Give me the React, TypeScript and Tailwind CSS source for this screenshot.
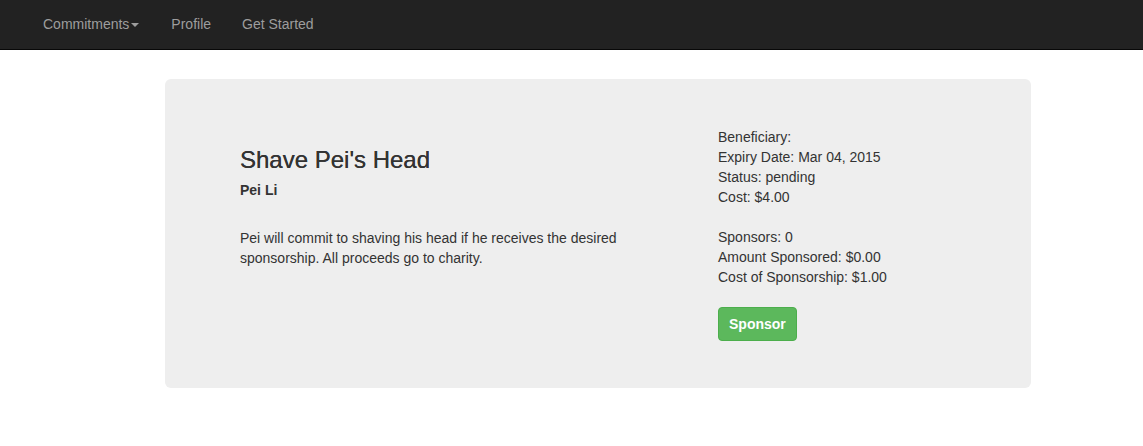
export default function App() {
  return (
    <div className="min-h-[446px] bg-white text-[14px] leading-[20px] text-[#333]" style={{ fontFamily: '"Liberation Sans", Arial, sans-serif' }}>
      <nav className="h-[50px] bg-[#222] border-b border-[#080808] flex items-start pl-[28px]">
        <a className="flex items-center px-[15px] pt-[14px] text-[#9d9d9d] leading-[20px]">
          Commitments
          <span className="ml-[2px] inline-block w-0 h-0 border-l-[4px] border-r-[4px] border-t-[4px] border-l-transparent border-r-transparent border-t-[#9d9d9d] mt-[1px]" />
        </a>
        <a className="ml-[2px] px-[15px] pt-[14px] text-[#9d9d9d] leading-[20px]">Profile</a>
        <a className="ml-[1px] px-[15px] pt-[14px] text-[#9d9d9d] leading-[20px]">Get Started</a>
      </nav>
      <div className="pt-[29px] pl-[165px]">
        <div className="w-[866px] h-[309px] bg-[#eee] rounded-[6px] pt-[48px] pb-[48px] pl-[75px] flex">
          <div className="w-[440px]">
            <h3 className="mt-[20px] text-[24px] leading-[26.4px] font-medium text-[#333] [text-shadow:0_0_0.4px_#333]">Shave Pei's Head</h3>
            <h5 className="mt-[10px] text-[14px] leading-[15.4px] font-bold text-[#333]">Pei Li</h5>
            <p className="mt-[29px]">Pei will commit to shaving his head if he receives the desired sponsorship. All proceeds go to charity.</p>
          </div>
          <div className="ml-[38px]">
            <div>Beneficiary:</div>
            <div>Expiry Date: Mar 04, 2015</div>
            <div>Status: pending</div>
            <div>Cost: $4.00</div>
            <div className="mt-[20px]">Sponsors: 0</div>
            <div>Amount Sponsored: $0.00</div>
            <div>Cost of Sponsorship: $1.00</div>
            <button className="mt-[20px] h-[34px] px-[10px] bg-[#5cb85c] border border-[#4cae4c] rounded-[4px] text-white font-bold text-[14px] leading-[20px]">Sponsor</button>
          </div>
        </div>
      </div>
    </div>
  );
}
